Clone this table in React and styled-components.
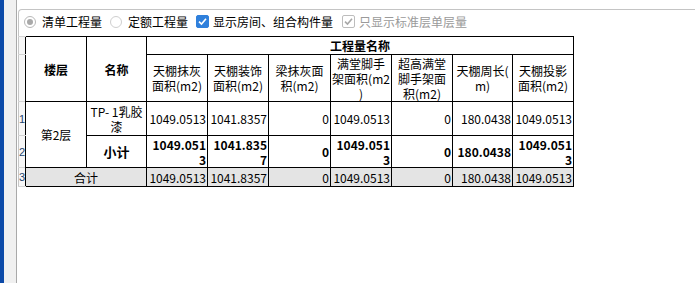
import React from "react";
import styled, { createGlobalStyle } from "styled-components";

const GlobalStyle = createGlobalStyle`
  html, body {
    margin: 0;
    padding: 0;
    background: #fff;
  }
  body {
    font-family: "Noto Sans CJK SC", "Noto Sans", sans-serif;
    font-size: 12px;
    color: #000;
  }
`;

const columns = [
  { label: "天棚抹灰\n面积(m2)", value: "1049.0513", sub: "1049.0513", total: "1049.0513" },
  { label: "天棚装饰\n面积(m2)", value: "1041.8357", sub: "1041.8357", total: "1041.8357" },
  { label: "梁抹灰面\n积(m2)", value: "0", sub: "0", total: "0" },
  { label: "满堂脚手\n架面积(m2\n)", value: "1049.0513", sub: "1049.0513", total: "1049.0513" },
  { label: "超高满堂\n脚手架面\n积(m2)", value: "0", sub: "0", total: "0" },
  { label: "天棚周长(\nm)", value: "180.0438", sub: "180.0438", total: "180.0438" },
  { label: "天棚投影\n面积(m2)", value: "1049.0513", sub: "1049.0513", total: "1049.0513" },
];

const colWidths = [61, 61, 62, 61, 61, 60, 61];

function App() {
  return (
    <>
      <GlobalStyle />
      <Page>
        <SideBar />
        <SideGutter />
        <Main>
          <Toolbar>
            <Option>
              <Radio $checked />
              <OptionText>清单工程量</OptionText>
            </Option>
            <Option>
              <Radio />
              <OptionText>定额工程量</OptionText>
            </Option>
            <Option $check>
              <CheckBox $checked>
                <CheckMark color="#fff" />
              </CheckBox>
              <OptionText>显示房间、组合构件量</OptionText>
            </Option>
            <Option $check>
              <CheckBox $disabled>
                <CheckMark color="#a8a8a8" />
              </CheckBox>
              <OptionText $disabled>只显示标准层单层量</OptionText>
            </Option>
          </Toolbar>
          <Table>
            <colgroup>
              <col style={{ width: 7 }} />
              <col style={{ width: 61 }} />
              <col style={{ width: 60 }} />
              {colWidths.map((w, i) => (
                <col key={i} style={{ width: w }} />
              ))}
            </colgroup>
            <tbody>
              <Row $h={18}>
                <RowHead />
                <Cell rowSpan={2} $bold>楼层</Cell>
                <Cell rowSpan={2} $bold>名称</Cell>
                <Cell colSpan={7} $bold>工程量名称</Cell>
              </Row>
              <Row $h={47}>
                <RowHead />
                {columns.map((c) => (
                  <HeadCell key={c.label}>{c.label}</HeadCell>
                ))}
              </Row>
              <Row $h={34}>
                <RowHead>1</RowHead>
                <Cell rowSpan={2}>第2层</Cell>
                <Cell>TP- 1乳胶漆</Cell>
                {columns.map((c, i) => (
                  <Cell key={i} $num>{c.value}</Cell>
                ))}
              </Row>
              <Row $h={32}>
                <RowHead>2</RowHead>
                <Cell $bold $big>小计</Cell>
                {columns.map((c, i) => (
                  <Cell key={i} $num $bold>{c.sub}</Cell>
                ))}
              </Row>
              <Row $h={19} $total>
                <RowHead>3</RowHead>
                <Cell colSpan={2}>合计</Cell>
                {columns.map((c, i) => (
                  <Cell key={i} $num>{c.total}</Cell>
                ))}
              </Row>
            </tbody>
          </Table>
        </Main>
      </Page>
    </>
  );
}

function CheckMark({ color }) {
  return (
    <svg width="9" height="9" viewBox="0 0 9 9">
      <path d="M1 4.6 L3.5 7 L8 1.8" fill="none" stroke={color} strokeWidth="1.6" />
    </svg>
  );
}

const Page = styled.div`
  display: flex;
  height: 283px;
  overflow: hidden;
`;
const SideBar = styled.div`
  width: 4px;
  background: #0c4aa8;
`;
const SideGutter = styled.div`
  width: 12px;
  background: #f0f0f0;
  border-right: 1px solid #a9a9a9;
`;
const Main = styled.div`
  flex: 1;
  padding: 9px 0 0 1px;
  display: flex;
  flex-direction: column;
  align-items: flex-start;
`;
const Toolbar = styled.div`
  align-self: stretch;
  display: flex;
  align-items: center;
  height: 27px;
  padding: 0 0 3px 5px;
  box-sizing: border-box;
  border-top: 1px solid #c4c4c4;
  border-left: 1px solid #c4c4c4;
  border-top-left-radius: 4px;
`;
const Option = styled.label`
  display: flex;
  align-items: center;
  gap: ${(p) => (p.$check ? "4px" : "6px")};
  margin-right: ${(p) => (p.$check ? "9px" : "8px")};
`;
const Radio = styled.span`
  width: 12px;
  height: 12px;
  box-sizing: border-box;
  border-radius: 50%;
  border: 1px solid ${(p) => (p.$checked ? "#b8b8b8" : "#cfcfcf")};
  background: #fff;
  display: flex;
  align-items: center;
  justify-content: center;
  &::after {
    content: "";
    width: 6px;
    height: 6px;
    border-radius: 50%;
    background: ${(p) => (p.$checked ? "#a9a9a9" : "transparent")};
  }
`;
const CheckBox = styled.span`
  width: 13px;
  height: 13px;
  box-sizing: border-box;
  border-radius: 2px;
  display: flex;
  align-items: center;
  justify-content: center;
  background: ${(p) => (p.$checked ? "#2f80dc" : "#fff")};
  border: 1px solid ${(p) => (p.$checked ? "#2f80dc" : "#bdbdbd")};
`;
const OptionText = styled.span`
  font-size: 12px;
  line-height: 14px;
  white-space: nowrap;
  color: ${(p) => (p.$disabled ? "#9a9a9a" : "#000")};
`;
const Table = styled.table`
  border-collapse: collapse;
  table-layout: fixed;
  width: 556px;
  font-size: 12px;
`;
const Row = styled.tr`
  height: ${(p) => p.$h}px;
  background: ${(p) => (p.$total ? "#e4e4e4" : "#fff")};
`;
const RowHead = styled.td`
  padding: 0;
  background: #f7f7f7;
  border-left: 1px solid #c6c6c6;
  border-top: 1px solid #d4d4d4;
  border-bottom: 1px solid #d4d4d4;
  border-right: none;
  font-family: "Liberation Sans", sans-serif;
  font-size: 11px;
  color: #24466f;
  text-align: left;
  vertical-align: middle;
  overflow: hidden;
`;
const Cell = styled.td`
  border: 1px solid #000;
  padding: 0 1px;
  line-height: 15px;
  font-size: ${(p) => (p.$big ? "13px" : "12px")};
  font-weight: ${(p) => (p.$bold ? 700 : 400)};
  text-align: ${(p) => (p.$num ? "right" : "center")};
  word-break: ${(p) => (p.$num ? "break-all" : "normal")};
  vertical-align: middle;
`;
const HeadCell = styled(Cell)`
  white-space: pre-line;
`;

export default App;
